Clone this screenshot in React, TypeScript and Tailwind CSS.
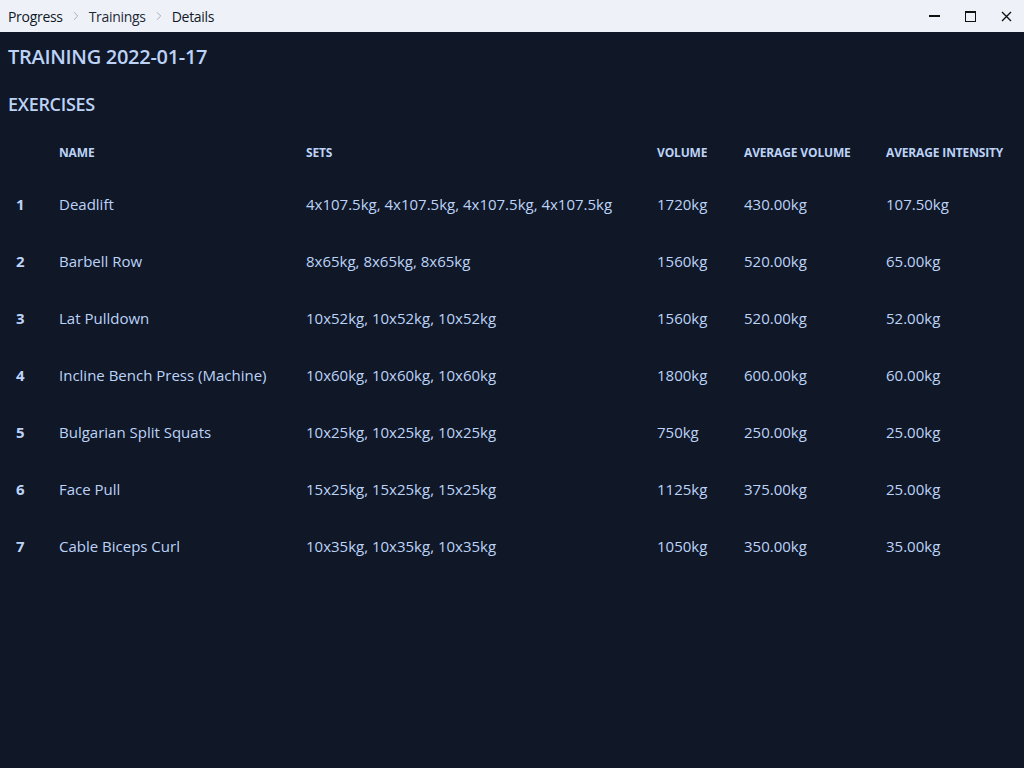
import { ChevronRight } from 'lucide-react';

const ROWS = [
  { name: 'Deadlift', sets: '4x107.5kg, 4x107.5kg, 4x107.5kg, 4x107.5kg', volume: '1720kg', avgVolume: '430.00kg', avgIntensity: '107.50kg' },
  { name: 'Barbell Row', sets: '8x65kg, 8x65kg, 8x65kg', volume: '1560kg', avgVolume: '520.00kg', avgIntensity: '65.00kg' },
  { name: 'Lat Pulldown', sets: '10x52kg, 10x52kg, 10x52kg', volume: '1560kg', avgVolume: '520.00kg', avgIntensity: '52.00kg' },
  { name: 'Incline Bench Press (Machine)', sets: '10x60kg, 10x60kg, 10x60kg', volume: '1800kg', avgVolume: '600.00kg', avgIntensity: '60.00kg' },
  { name: 'Bulgarian Split Squats', sets: '10x25kg, 10x25kg, 10x25kg', volume: '750kg', avgVolume: '250.00kg', avgIntensity: '25.00kg' },
  { name: 'Face Pull', sets: '15x25kg, 15x25kg, 15x25kg', volume: '1125kg', avgVolume: '375.00kg', avgIntensity: '25.00kg' },
  { name: 'Cable Biceps Curl', sets: '10x35kg, 10x35kg, 10x35kg', volume: '1050kg', avgVolume: '350.00kg', avgIntensity: '35.00kg' },
];

const COLS = 'grid grid-cols-[43px_247px_351px_87px_142px_1fr]';

export default function App() {
  return (
    <div className="w-[1024px] h-[768px] flex flex-col bg-[#101727] font-['Open_Sans',sans-serif] overflow-hidden">
      {/* title bar */}
      <div className="h-8 flex items-center justify-between bg-[#eef2f8] shrink-0">
        <div className="flex items-center pl-2 text-[14px] text-[#111827] tracking-[-0.3px]">
          <span>Progress</span>
          <ChevronRight className="w-3.5 h-3.5 mx-[6px] text-[#9ca3af]" strokeWidth={1.5} />
          <span className="text-[#1f2937]">Trainings</span>
          <ChevronRight className="w-3.5 h-3.5 mx-[6px] text-[#9ca3af]" strokeWidth={1.5} />
          <span>Details</span>
        </div>
        <div className="flex items-center h-full">
          <div className="w-9 h-full flex items-center justify-center">
            <div className="w-[11px] h-[2px] bg-[#111]" />
          </div>
          <div className="w-9 h-full flex items-center justify-center">
            <div className="w-[11px] h-[11px] border-[1.5px] border-t-[2.5px] border-[#111]" />
          </div>
          <div className="w-9 h-full flex items-center justify-center">
            <svg width="11" height="11" viewBox="0 0 11 11">
              <path d="M1 1 L10 10 M10 1 L1 10" stroke="#111" strokeWidth="1.4" />
            </svg>
          </div>
        </div>
      </div>

      <div className="flex flex-col px-2 pt-[11px] text-[#bcd3f7]">
        <h1 className="text-[20px] leading-7 font-semibold tracking-[-0.3px]">TRAINING 2022-01-17</h1>
        <h2 className="mt-[19px] text-[18px] leading-7 font-semibold tracking-[-0.3px]">EXERCISES</h2>

        <div className="mt-[12px]">
          <div className={`${COLS} h-[46px] items-center text-[12px] font-bold tracking-[-0.15px]`}>
            <div className="px-2" />
            <div className="px-2">NAME</div>
            <div className="px-2">SETS</div>
            <div className="px-2">VOLUME</div>
            <div className="px-2">AVERAGE VOLUME</div>
            <div className="px-2">AVERAGE INTENSITY</div>
          </div>
          {ROWS.map((r, i) => (
            <div key={r.name} className={`${COLS} h-[57px] items-center text-[15px]`}>
              <div className="px-2 font-bold">{i + 1}</div>
              <div className="px-2 whitespace-nowrap">{r.name}</div>
              <div className="px-2 whitespace-nowrap">{r.sets}</div>
              <div className="px-2">{r.volume}</div>
              <div className="px-2">{r.avgVolume}</div>
              <div className="px-2">{r.avgIntensity}</div>
            </div>
          ))}
        </div>
      </div>
    </div>
  );
}
